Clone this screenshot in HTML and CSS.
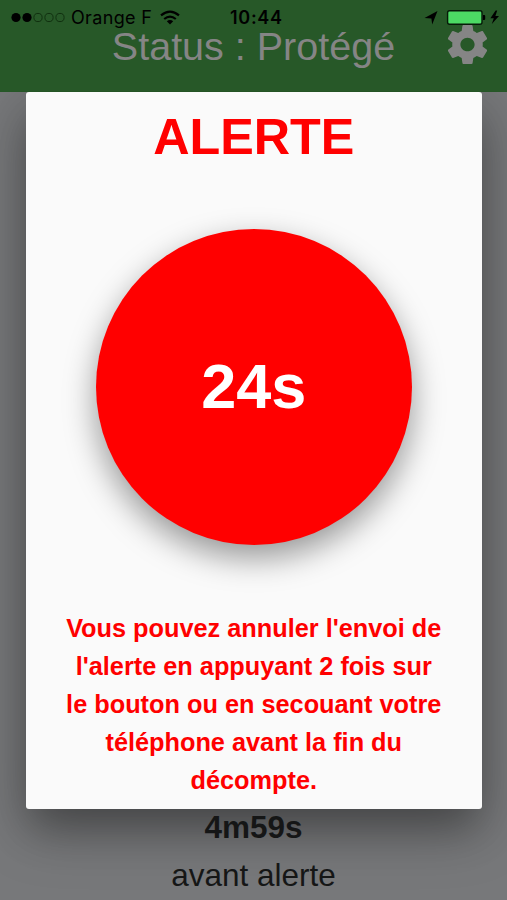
FILE: index.html
```html
<!DOCTYPE html>
<html lang="fr">
<head>
<meta charset="utf-8">
<title>Alerte</title>
<link rel="stylesheet" href="styles.css">
</head>
<body>
<div class="screen">
  <header class="header">
    <div class="status">
      <div class="carrier">
        <svg class="signal" width="55" height="12" viewBox="0 0 55 12"><circle cx="5" cy="5.5" r="4.6"/><circle cx="16" cy="5.5" r="4.6"/><g fill="none" stroke="#10300f" stroke-width="1"><circle cx="27" cy="5.5" r="4.1"/><circle cx="38" cy="5.5" r="4.1"/><circle cx="49" cy="5.5" r="4.1"/></g></svg>
        <span class="operator">Orange F</span>
        <svg class="wifi" width="20" height="16" viewBox="0 0 20 16"><g fill="none" stroke="#000" stroke-width="2.2"><path d="M1 5.4Q10-2.2 19 5.4"/><path d="M4.2 9Q10 4.2 15.8 9"/></g><path d="M6.8 11.3Q10 8.8 13.2 11.3L10 14.6Z"/></svg>
      </div>
      <div class="clock">10:44</div>
      <div class="power">
        <svg width="76" height="18" viewBox="0 0 76 18"><path d="M-.5 9L12.5 2L7.2 15.5L6.4 9.4Z"/><rect x="22.6" y="1.8" width="34.4" height="13.4" rx="2" fill="#4cda64" stroke="#071b09" stroke-width="1.4"/><path d="M58 6h1.2q1 0 1 1v3q0 1-1 1H58z"/><path d="M70.6 1.6L65.4 9.2h3.4L66.8 15L74 7h-3.6L72.2 1.6Z"/></svg>
      </div>
    </div>
    <h1 class="title">Status : Protégé</h1>
    <svg class="gear" width="39" height="39" viewBox="2.41 2 19.18 20" preserveAspectRatio="none"><path d="M19.43 12.98c.04-.32.07-.64.07-.98s-.03-.66-.07-.98l2.11-1.65c.19-.15.24-.42.12-.64l-2-3.46c-.12-.22-.39-.3-.61-.22l-2.49 1c-.52-.4-1.08-.73-1.69-.98l-.38-2.65C14.46 2.18 14.25 2 14 2h-4c-.25 0-.46.18-.49.42l-.38 2.65c-.61.25-1.17.59-1.69.98l-2.49-1c-.23-.09-.49 0-.61.22l-2 3.46c-.13.22-.07.49.12.64l2.11 1.65c-.04.32-.07.65-.07.98s.03.66.07.98l-2.11 1.65c-.19.15-.24.42-.12.64l2 3.46c.12.22.39.3.61.22l2.49-1c.52.4 1.08.73 1.69.98l.38 2.65c.03.24.24.42.49.42h4c.25 0 .46-.18.49-.42l.38-2.65c.61-.25 1.17-.59 1.69-.98l2.49 1c.23.09.49 0 .61-.22l2-3.46c.12-.22.07-.49-.12-.64l-2.11-1.65zM12 15.5c-1.93 0-3.5-1.57-3.5-3.5s1.57-3.5 3.5-3.5 3.5 1.57 3.5 3.5-1.57 3.5-3.5 3.5z"/></svg>
  </header>
  <main class="dialog">
    <h2 class="alert-title">ALERTE</h2>
    <button class="countdown">24s</button>
    <p class="message">Vous pouvez annuler l'envoi de<br>l'alerte en appuyant 2 fois sur<br>le bouton ou en secouant votre<br>téléphone avant la fin du<br>décompte.</p>
  </main>
  <footer class="timer">
    <strong class="remaining">4m59s</strong>
    <span class="before">avant alerte</span>
  </footer>
</div>
</body>
</html>
```
FILE: styles.css
```css
* { box-sizing: border-box; }

body {
  margin: 0;
  font-family: "Liberation Sans", Arial, sans-serif;
}

.screen {
  display: flex;
  flex-direction: column;
  width: 507px;
  height: 900px;
  overflow: hidden;
  background: #77787a;
}

.header {
  position: relative;
  flex: none;
  height: 91.5px;
  background: #275828;
}

.status {
  display: grid;
  grid-template-columns: 200px 1fr 82px;
  align-items: center;
  height: 27px;
  padding: 8px 0 0 11px;
  color: #000;
  font-family: Inter, Roboto, sans-serif;
  font-size: 18px;
  line-height: 19px;
}

.carrier {
  display: flex;
  align-items: center;
}

.signal { margin-right: 5px; }
.operator { width: 84px; letter-spacing: 0.35px; white-space: nowrap; }
.wifi { margin-left: 5px; }

.clock {
  padding-left: 19px;
  font-weight: 600;
  letter-spacing: 0.7px;
}

.power svg { display: block; overflow: visible; }

.title {
  margin: 0;
  color: #858585;
  font-size: 39.5px;
  font-weight: 400;
  line-height: 38px;
  text-align: center;
  white-space: nowrap;
}

.gear {
  position: absolute;
  top: 25px;
  left: 448px;
  fill: #858585;
}

.dialog {
  position: relative;
  flex: none;
  width: 455.5px;
  height: 717.5px;
  margin-left: 26px;
  border-radius: 3px;
  background: #fafafa;
  box-shadow: 0 18px 60px rgba(0, 0, 0, 0.26), 0 24px 38px -6px rgba(0, 0, 0, 0.25);
  color: #f00;
  text-align: center;
  clip-path: inset(0 -40px -100px -40px);
}

.alert-title {
  margin: 0;
  padding-top: 15.5px;
  font-size: 50.3px;
  line-height: 60px;
}

.countdown {
  display: block;
  width: 316px;
  height: 316px;
  margin: 62px auto 0;
  padding: 0 0 2px;
  border: 0;
  border-radius: 50%;
  background: #f00;
  box-shadow: 0 13px 32px rgba(0, 0, 0, 0.4);
  color: #fff;
  font: bold 63px/1 "Liberation Sans", Arial, sans-serif;
}

.message {
  margin: 64px 0 0;
  font-size: 25.3px;
  font-weight: 700;
  line-height: 38px;
  white-space: nowrap;
}

.timer {
  display: flex;
  flex-direction: column;
  align-items: center;
  color: #151616;
  font-size: 31.5px;
  line-height: 48px;
}

.remaining,
.before {
  position: relative;
  height: 48px;
}

.remaining { margin-top: -6px; }
```
